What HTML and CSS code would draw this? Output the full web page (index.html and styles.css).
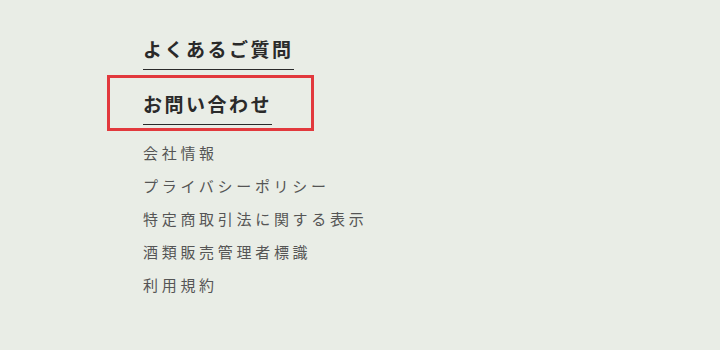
FILE: index.html
```html
<!DOCTYPE html>
<html lang="ja">
<head>
<meta charset="utf-8">
<link rel="stylesheet" href="styles.css">
</head>
<body>
<nav class="footer-nav">
  <ul class="main-links">
    <li><a class="main-link" href="#">よくあるご質問</a></li>
    <li class="highlighted"><a class="main-link" href="#">お問い合わせ</a></li>
  </ul>
  <ul class="sub-links">
    <li><a href="#">会社情報</a></li>
    <li><a href="#">プライバシーポリシー</a></li>
    <li><a href="#">特定商取引法に関する表示</a></li>
    <li><a href="#">酒類販売管理者標識</a></li>
    <li><a href="#">利用規約</a></li>
  </ul>
</nav>
</body>
</html>
```
FILE: styles.css
```css
html, body {
  margin: 0;
  padding: 0;
  background: #e9ede6;
}
body {
  font-family: "Noto Sans CJK JP", "Noto Sans", sans-serif;
  width: 720px;
  height: 350px;
  overflow: hidden;
}
.footer-nav {
  padding: 36px 0 0 143px;
}
ul {
  list-style: none;
  margin: 0;
  padding: 0;
}
a {
  text-decoration: none;
}
.main-links li {
  display: flex;
}
.main-links li + li {
  margin-top: 21px;
}
.main-link {
  display: inline-block;
  font-size: 19px;
  font-weight: 700;
  line-height: 26px;
  letter-spacing: 2.5px;
  color: #2a2a2a;
  padding-bottom: 7px;
  border-bottom: 1px solid #2a2a2a;
}
.highlighted {
  position: relative;
  width: max-content;
}
.highlighted::after {
  content: "";
  position: absolute;
  top: -16px;
  left: -36px;
  right: -42px;
  bottom: -6px;
  border: 3px solid #e2393d;
  pointer-events: none;
}
.sub-links {
  margin-top: 11px;
}
.sub-links li a {
  display: block;
  font-size: 15px;
  line-height: 33px;
  letter-spacing: 3.7px;
  color: #555;
}
```
